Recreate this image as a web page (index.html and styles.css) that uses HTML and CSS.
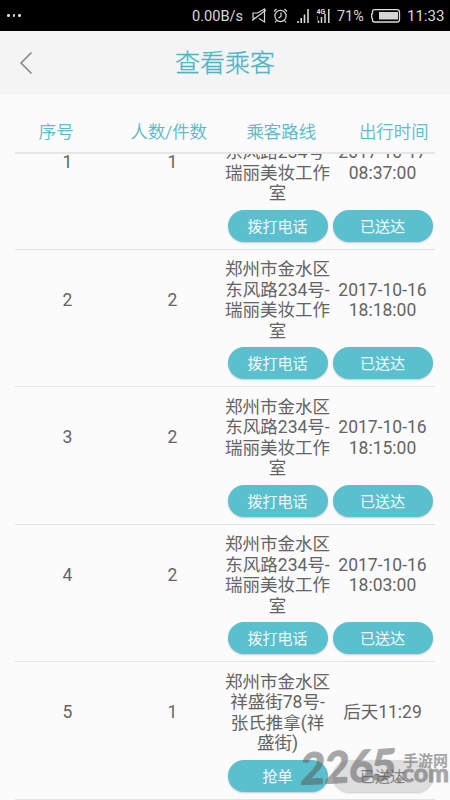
FILE: index.html
```html
<!DOCTYPE html>
<html lang="zh-CN">
<head>
<meta charset="utf-8">
<title>查看乘客</title>
<link rel="stylesheet" href="styles.css">
</head>
<body>
<div class="status">
  <span class="dots"><i></i><i></i><i></i></span>
  <span class="speed">0.00B/s</span>
  <svg class="icons" width="90" height="20" viewBox="250 6 90 20" fill="none" stroke="#d8d8d8">
    <path d="M256.500 18h-3.500v-5h4.500l7-4v13l-5.500-3.500M252 20.500l14-10.500" stroke-width="1.200"/>
    <circle cx="280.500" cy="16" r="5.600" stroke-width="1.200"/>
    <path d="M281 12.500v3.700l-2.500 2M274 11.500l2.500-2.500M287 11.500l-2.500-2.500M276.500 20.500l-1.500 2M284.500 20.500l1.500 2" stroke-width="1.200"/>
    <path d="M298 21v2M301.200 18v5M304.500 14.500v8.500M308 9v14" stroke-width="1.600"/>
    <path d="M321.500 17v6M325 14v9M328.800 9v14M318.500 20.500v2.500" stroke-width="1.500"/>
    <path d="M317.500 16v4" stroke="#666" stroke-width="1.200"/>
    <text class="net" x="316.500" y="14">4G</text>
  </svg>
  <span class="pct">71%</span>
  <svg class="battery" width="30" height="14" viewBox="371 9 30 14">
    <path d="M374.500 9.700h22.500q2.500 0 2.500 2.500v7.300q0 2.500-2.500 2.500h-22.500q-2 0-2-2v-1.500q-.8-.3-.8-1v-3.300q0-.7.800-1v-1.500q0-2 2-2z" fill="none" stroke="#ddd" stroke-width="1.300"/>
    <path d="M379 12h19v7.500h-19z" fill="#d5d5d5"/>
  </svg>
  <span class="clock">11:33</span>
</div>
<header class="bar">
  <svg class="back" width="14" height="24" viewBox="0 0 14 24"><path d="M12.500 1.500L2 12l10.500 10.500" fill="none" stroke="#858585" stroke-width="1.500"/></svg>
  <h1>查看乘客</h1>
</header>
<div class="heads"><span>序号</span><span>人数/件数</span><span>乘客路线</span><span>出行时间</span></div>
<main class="list">
  <div class="rows">
    <section class="row"><p>1</p><p>1</p><p class="tail">东风路234号-<br>瑞丽美妆工作<br>室</p><p>2017-10-17<br>08:37:00</p><button class="call">拨打电话</button><button>已送达</button></section>
    <section class="row"><p>2</p><p>2</p><p>郑州市金水区<br>东风路234号-<br>瑞丽美妆工作<br>室</p><p>2017-10-16<br>18:18:00</p><button class="call">拨打电话</button><button>已送达</button></section>
    <section class="row"><p>3</p><p>2</p><p>郑州市金水区<br>东风路234号-<br>瑞丽美妆工作<br>室</p><p>2017-10-16<br>18:15:00</p><button class="call">拨打电话</button><button>已送达</button></section>
    <section class="row"><p>4</p><p>2</p><p>郑州市金水区<br>东风路234号-<br>瑞丽美妆工作<br>室</p><p>2017-10-16<br>18:03:00</p><button class="call">拨打电话</button><button>已送达</button></section>
    <section class="row"><p>5</p><p>1</p><p>郑州市金水区<br>祥盛街78号-<br>张氏推拿(祥<br>盛街)</p><p>后天11:29</p><button class="call">抢单</button><button class="off">已送达</button></section>
  </div>
</main>
<svg class="mark" width="155" height="50" viewBox="295 745 155 50">
  <g class="digits">
    <text transform="translate(300 785) rotate(-3) skewX(-6)" font-size="44" textLength="73" lengthAdjust="spacingAndGlyphs">226</text>
    <text transform="translate(370 781) rotate(-3) skewX(-8)" font-size="43">5</text>
    <text x="396" y="782" font-size="25" textLength="53" lengthAdjust="spacingAndGlyphs">.com</text>
  </g>
  <text class="cn" x="403" y="766" textLength="45">手游网</text>
</svg>
</body>
</html>
```
FILE: styles.css
```css
* { box-sizing: border-box; }
body {
  margin: 0;
  width: 450px;
  height: 800px;
  overflow: hidden;
  position: relative;
  display: flex;
  flex-direction: column;
  background: #fbfbfb;
  color: #646464;
  font-family: Roboto, "Noto Sans CJK SC", sans-serif;
}
.status {
  height: 31px;
  flex: none;
  display: flex;
  align-items: center;
  background: #000;
  color: #d8d8d8;
  font-size: 14px;
}
.dots { display: flex; gap: 3px; margin-left: 7px; width: 185px; }
.dots i { width: 2.5px; height: 2.5px; border-radius: 50%; background: #ddd; }
.speed { width: 58px; font-size: 14.6px; white-space: nowrap; }
.icons { flex: none; width: 90px; margin-right: -3px; }
.net { font: bold 7px Roboto, sans-serif; fill: #ddd; stroke: none; }
.pct { width: 34px; padding-top: 1px; font-size: 14.4px; }
.battery { flex: none; }
.clock { margin-left: 6px; font-size: 15px; }
.bar {
  height: 63px;
  flex: none;
  display: flex;
  align-items: center;
  padding-left: 19px;
  background: #f4f4f4;
}
h1 {
  flex: 1;
  margin: 3px 33px 0 0;
  text-align: center;
  font-size: 25px;
  line-height: 30px;
  font-weight: 300;
  color: #4fb5c5;
  -webkit-text-stroke: .3px;
}
.heads {
  height: 58px;
  flex: none;
  display: grid;
  grid-template-columns: repeat(4, 1fr);
  padding-top: 25px;
  font-size: 17.4px;
  line-height: 26px;
  font-weight: 300;
  text-align: center;
  color: #4fb5c5;
  -webkit-text-stroke: .25px;
}
.list {
  flex: 1;
  margin: 0 15px;
  overflow: hidden;
  border-top: 2px solid #e6e6e6;
}
.rows { margin-top: -42px; }
.row {
  height: 137.5px;
  display: grid;
  grid-template-columns: repeat(4, 105px);
  grid-template-rows: 97.5px 33px;
  border-bottom: 1.5px solid #e2e2e2;
}
.row p {
  margin: 0;
  padding-top: 4px;
  align-self: center;
  text-align: center;
  font-size: 17.5px;
  line-height: 20.6px;
  white-space: nowrap;
}
.row .tail { padding-top: 24.6px; }
button {
  width: 100px;
  height: 32px;
  margin: 0 0 0 2.5px;
  padding: 1px 0 0;
  border: 0;
  border-radius: 16px;
  background: #5bc0ce;
  color: #fff;
  font: 300 15px/32px Roboto, "Noto Sans CJK SC", sans-serif;
  -webkit-text-stroke: .25px;
  box-shadow: 0 1px 2px #0003;
}
.call { grid-column: 3; }
.off { background: #dedede; color: #777; }
.mark { position: absolute; left: 295px; top: 745px; }
.digits { font-family: Lato, sans-serif; font-weight: 900; fill: #555; stroke: #555; stroke-width: .8; opacity: .5; }
.cn { font: bold 15px "Noto Sans CJK SC", sans-serif; fill: #777; opacity: .65; }
```
